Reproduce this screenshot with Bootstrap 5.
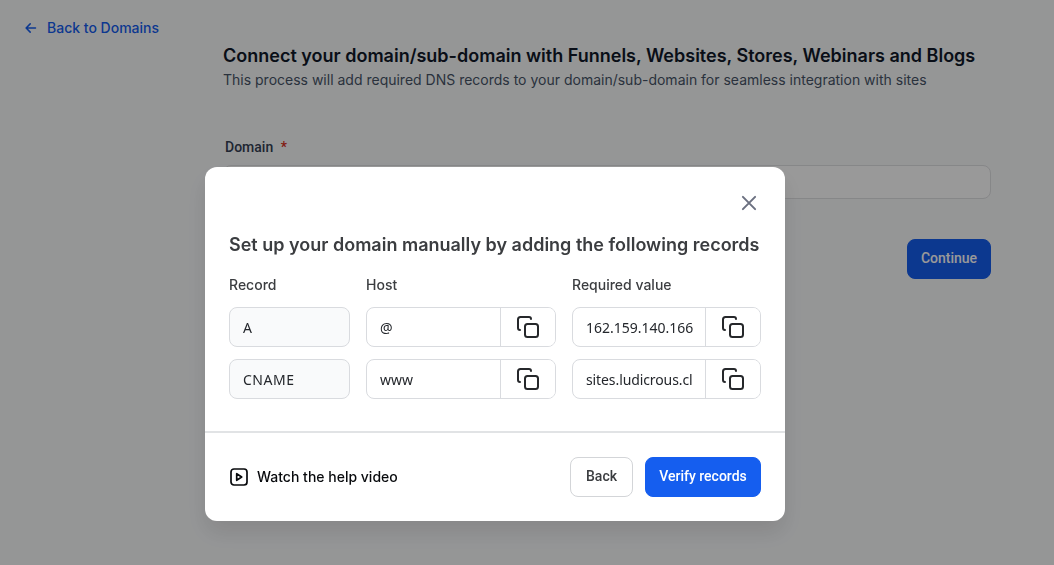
<!DOCTYPE html>
<html lang="en">
<head>
<meta charset="utf-8">
<meta name="viewport" content="width=device-width, initial-scale=1">
<title>Connect your domain</title>
<link href="https://cdn.jsdelivr.net/npm/bootstrap@5.3.0/dist/css/bootstrap.min.css" rel="stylesheet">
<style>
body{background:#f9fafb;font-family:Inter,sans-serif;font-size:14px;line-height:20px;color:#101828;height:565px;overflow:hidden}
.back-link{color:#155eef;padding:18px 0 0 23px;font-weight:500;gap:8px}
.page-main{width:768px;margin:6px 0 0 223px}
.page-title{font-size:18px;line-height:24px;font-weight:600;margin:0;white-space:nowrap}
.page-sub{line-height:20px;color:#475467;margin:2px 0 0;white-space:nowrap}
.roboto{font-family:Roboto,sans-serif;font-weight:500}
.domain-label{margin:47px 0 8px 2px;color:#344054}
.domain-label span{color:#d92d20;margin-left:4px}
.domain-input{height:34px;border:1px solid #e0e1e3;border-radius:8px;background:#fff}
.btn-ui{height:40px;border-radius:8px;font-size:14px;line-height:20px;padding:0 0 2px}
.btn-blue{background:#155eef;color:#fff;border-color:#155eef}
.btn-line{background:#fff;color:#3b3d40;border-color:#d3d5d8}
.btn-continue{width:84px;margin-top:40px}
.btn-back{width:63px}
.btn-verify{width:116px}
.modal-backdrop{--bs-backdrop-opacity:.4}
.setup-dialog{max-width:580px;width:580px;margin:167px 0 0 205px}
.setup-dialog .modal-content{height:354px;border:0;border-radius:12px;box-shadow:0 12px 22px rgba(0,0,0,.1)}
.setup-top{padding:24px 24px 0;height:264px}
.close-x{width:24px;height:24px;padding:0;border:0;background:none}
.setup-title{font-size:18px;line-height:28px;font-weight:600;color:#3b3d40;margin:16px 0;white-space:nowrap}
.records{display:grid;grid-template-columns:121px 190px 189px;column-gap:16px;row-gap:12px}
.col-title{color:#3b3d40;font-weight:500;white-space:nowrap}
.field{height:40px;border:1px solid #d9dbdf;border-radius:8px;font-family:"Noto Sans",sans-serif;color:#24272c;display:flex;overflow:hidden;background:#fff}
.field-fixed{background:#f9fafb}
.field-text{padding:1px 0 0 13px;flex:1;min-width:0;align-self:center;white-space:nowrap}
.wide-text{letter-spacing:.5px}
.tight-text{letter-spacing:-.1px}
.copy-btn{width:55px;border:0;border-left:1px solid #d9dbdf;background:#fff;padding:0}
.setup-foot{border-top:2px solid #e1e3e5;padding:0 24px;height:89px}
.help-link{color:#080a0d;font-weight:500;gap:8px}
</style>
</head>
<body>
<svg class="d-none"><symbol id="copy" viewBox="0 0 24 24"><g fill="none" stroke="#26282b" stroke-width="2" stroke-linecap="round" stroke-linejoin="round"><rect x="9" y="9" width="13" height="13" rx="2.5"/><path d="M4 15c-1.200 0-2-.8-2-2V4.500C2 3 3 2 4.500 2H13c1.200 0 2 .8 2 2"/></g></symbol></svg>
<a class="back-link d-flex align-items-center text-decoration-none" href="#">
<svg width="16" height="16" viewBox="0 0 16 16" fill="none" stroke="currentColor" stroke-width="1.5" stroke-linecap="round" stroke-linejoin="round"><path d="M12.500 8H3.200M7.200 3.900 3.100 8l4.100 4.100"/></svg>
<span>Back to Domains</span></a>
<main class="page-main">
<h1 class="page-title">Connect your domain/sub-domain with Funnels, Websites, Stores, Webinars and Blogs</h1>
<p class="page-sub">This process will add required DNS records to your domain/sub-domain for seamless integration with sites</p>
<div class="domain-label roboto">Domain <span>*</span></div>
<div class="domain-input"></div>
<div class="d-flex justify-content-end"><button class="btn btn-ui btn-blue btn-continue roboto">Continue</button></div>
</main>
<div class="modal-backdrop show"></div>
<div class="modal d-block" tabindex="-1" role="dialog">
<div class="modal-dialog setup-dialog"><div class="modal-content">
<div class="setup-top">
<div class="d-flex justify-content-end"><button class="close-x" aria-label="Close"><svg class="d-block" width="24" height="24" viewBox="0 0 24 24" fill="none" stroke="#6b7080" stroke-width="2" stroke-linecap="round"><path d="m5.900 5.900 12.200 12.200M18.100 5.900 5.900 18.100"/></svg></button></div>
<h2 class="setup-title">Set up your domain manually by adding the following records</h2>
<div class="records">
<div class="col-title">Record</div><div class="col-title">Host</div><div class="col-title">Required value</div>
<div class="field field-fixed"><span class="field-text">A</span></div>
<div class="field"><span class="field-text">@</span><button class="copy-btn d-flex align-items-center justify-content-center" aria-label="Copy"><svg width="24" height="24"><use href="#copy"/></svg></button></div>
<div class="field"><span class="field-text">162.159.140.166</span><button class="copy-btn d-flex align-items-center justify-content-center" aria-label="Copy"><svg width="24" height="24"><use href="#copy"/></svg></button></div>
<div class="field field-fixed"><span class="field-text wide-text">CNAME</span></div>
<div class="field"><span class="field-text">www</span><button class="copy-btn d-flex align-items-center justify-content-center" aria-label="Copy"><svg width="24" height="24"><use href="#copy"/></svg></button></div>
<div class="field"><span class="field-text tight-text">sites.ludicrous.cl</span><button class="copy-btn d-flex align-items-center justify-content-center" aria-label="Copy"><svg width="24" height="24"><use href="#copy"/></svg></button></div>
</div>
</div>
<div class="setup-foot d-flex align-items-center justify-content-between">
<a href="#" class="help-link d-flex align-items-center text-decoration-none"><svg width="20" height="20" viewBox="0 0 20 20" fill="none" stroke="currentColor" stroke-width="1.7" stroke-linejoin="round"><rect x="2" y="2" width="16" height="16" rx="3"/><path d="M7.700 6.700v6.600l5-3.300z"/></svg><span>Watch the help video</span></a>
<div class="d-flex column-gap-2"><button class="btn btn-ui btn-line btn-back me-1 roboto">Back</button><button class="btn btn-ui btn-blue btn-verify roboto">Verify records</button></div>
</div>
</div></div>
</div>
<script src="https://cdn.jsdelivr.net/npm/bootstrap@5.3.0/dist/js/bootstrap.bundle.min.js"></script>
</body>
</html>
